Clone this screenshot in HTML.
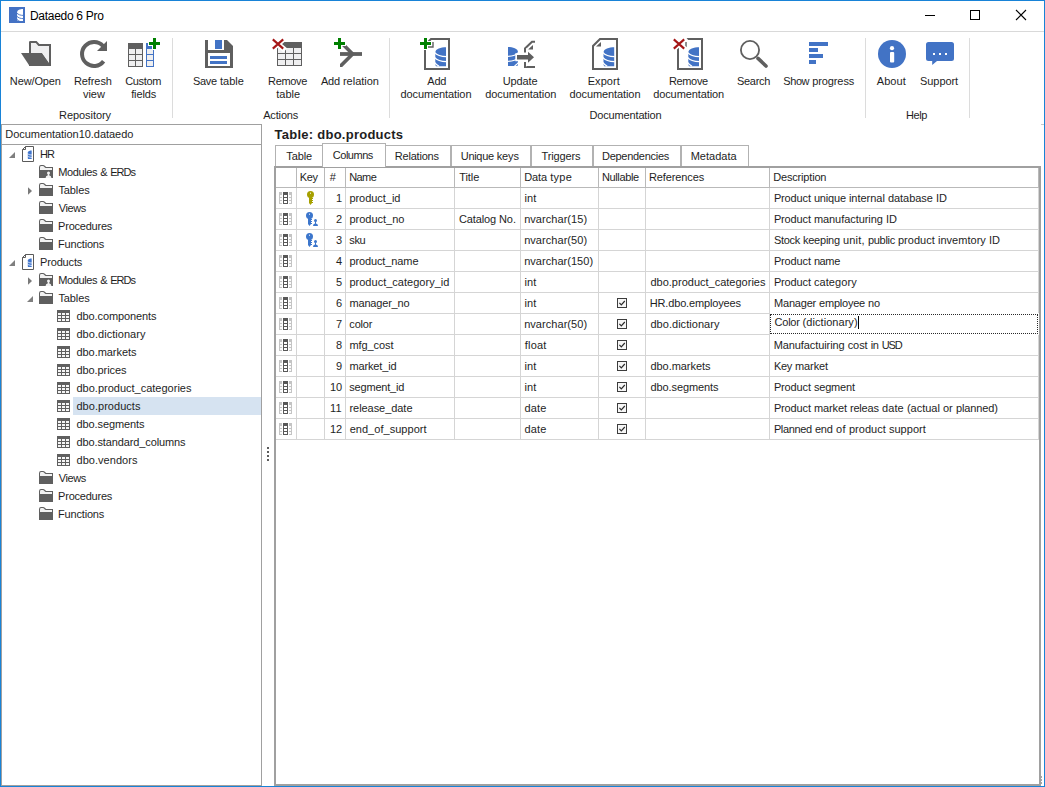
<!DOCTYPE html>
<html><head><meta charset="utf-8"><title>Dataedo 6 Pro</title>
<style>
html,body{margin:0;padding:0;background:#fff;}
body{width:1045px;height:787px;position:relative;overflow:hidden;font-family:"Liberation Sans",sans-serif;font-size:11px;color:#1e1e1e;}
.b{position:absolute;box-sizing:border-box;}
.t{position:absolute;white-space:pre;line-height:13px;height:13px;font-size:11px;}
.w{position:absolute;top:0;}
svg{position:absolute;overflow:visible;}

.t12{font-size:12px;line-height:15px;height:15px;}
.hd{font-weight:bold;font-size:13px;line-height:16px;height:16px;}

</style></head><body>
<div class="b" style="left:0px;top:0px;width:1045px;height:787px;border:1px solid #1883d7;"></div>
<svg style="left:9px;top:7px" width="16" height="16" viewBox="0 0 16 16"><rect width="16" height="16" fill="#4472c4"/><path d="M14 2C11 2 8.1 3 8.1 5.4V13L8.8 14H14Z" fill="#fff"/><path d="M7.6 5.8C9.4 7.8 11.6 8.4 14.4 8.4M7.6 9C9.4 11 11.6 11.6 14.4 11.6M7.6 12C8.6 13.2 9.6 13.9 10.8 14.4" stroke="#4472c4" stroke-width="0.9" fill="none"/></svg>
<svg style="left:21px;top:41px" width="30" height="25" viewBox="0 0 30 25"><path d="M8 1.2Q8 0 9.2 0H15.6L18.4 3H30V25H8Z" fill="#5f5f5f"/><path d="M10 2H14.8L17.4 5H28V22.4L20.7 12H10Z" fill="#efeff0"/><path d="M0 12H20.7L30 25H8.6Z" fill="#5f5f5f"/></svg>
<svg style="left:79px;top:39px" width="30" height="30" viewBox="0 0 30 30"><path d="M23.9 6.9A12 12 0 1 0 24.6 22.2" fill="none" stroke="#5f5f5f" stroke-width="4"/><path d="M28 2V12H18Z" fill="#5f5f5f"/></svg>
<svg style="left:128px;top:38px" width="32" height="30" viewBox="0 0 32 30"><rect x="0" y="5" width="15" height="24" fill="#5f5f5f"/><g fill="#efeff0"><rect x="1" y="11" width="6" height="5"/><rect x="8" y="11" width="6" height="5"/><rect x="1" y="17" width="6" height="5"/><rect x="8" y="17" width="6" height="5"/><rect x="1" y="23" width="6" height="5"/><rect x="8" y="23" width="6" height="5"/></g><rect x="18" y="5" width="8" height="24" fill="#4273c5"/><g fill="#efeff0"><rect x="19" y="11" width="6" height="5"/><rect x="19" y="17" width="6" height="5"/><rect x="19" y="23" width="6" height="5"/></g><path d="M20 5.5H33M26.5 -1V12" stroke="#fff" stroke-width="5"/><path d="M21 5.5H32M26.5 0V11" stroke="#008000" stroke-width="3"/></svg>
<svg style="left:205px;top:40px" width="28" height="28" viewBox="0 0 28 28"><path d="M0 0H22L28 6V28H0Z" fill="#5f5f5f"/><rect x="3" y="0" width="16" height="10" fill="#fff"/><rect x="3" y="13" width="22" height="13" fill="#fff"/><rect x="10" y="0" width="7" height="9" fill="#4273c5"/><rect x="5" y="16" width="17" height="3" fill="#4273c5"/><rect x="5" y="21" width="17" height="3" fill="#4273c5"/></svg>
<svg style="left:277px;top:42px" width="25" height="24" viewBox="0 0 25 24"><rect x="0" y="0" width="25" height="24" fill="#5f5f5f"/><g fill="#efeff0"><rect x="1" y="6" width="7" height="5"/><rect x="1" y="12" width="7" height="5"/><rect x="1" y="18" width="7" height="5"/><rect x="9" y="6" width="7" height="5"/><rect x="9" y="12" width="7" height="5"/><rect x="9" y="18" width="7" height="5"/><rect x="17" y="6" width="7" height="5"/><rect x="17" y="12" width="7" height="5"/><rect x="17" y="18" width="7" height="5"/></g></svg>
<svg style="left:272px;top:39px" width="12" height="10" viewBox="0 0 12 10"><path d="M0.8 0.4L11.2 9.6M11.2 0.4L0.8 9.6" stroke="#fff" stroke-width="5.4" stroke-linecap="square"/><path d="M0.8 0.4L11.2 9.6M11.2 0.4L0.8 9.6" stroke="#a51616" stroke-width="2.1"/></svg>
<svg style="left:338px;top:42px" width="26" height="26" viewBox="0 0 26 26"><clipPath id="ar"><rect x="2" y="0" width="24" height="25"/></clipPath><g clip-path="url(#ar)"><path d="M2 12H24" stroke="#5f5f5f" stroke-width="3.8" fill="none"/><path d="M3.6 1L14.6 12L1.6 25" stroke="#5f5f5f" stroke-width="3.6" fill="none"/></g></svg>
<svg style="left:334px;top:38px" width="11" height="11" viewBox="0 0 11 11"><path d="M-1 5.5H12M5.5 -1V12" stroke="#fff" stroke-width="5"/><path d="M0 5.5H11M5.5 0V11" stroke="#008000" stroke-width="3"/></svg>
<svg style="left:424px;top:38px" width="26" height="32" viewBox="0 0 26 32"><path d="M7 1H25V31H1V7Z" fill="#fff" stroke="#5f5f5f" stroke-width="2"/><path d="M9 4V9H4" fill="none" stroke="#5f5f5f" stroke-width="1.4"/><g transform="translate(11 9.3)"><path d="M11 0C6 0 0.3 1.6 0.3 5.2V17.4L1 19H11Z" fill="#4273c5"/><path d="M-0.5 5.1C2 8.1 7 9.3 11.5 9.3M-0.5 10.1C2 13.1 7 14.3 11.5 14.3M-0.5 15.2C1 17 2.4 18 4 19" stroke="#fff" stroke-width="1.3" fill="none"/></g></svg>
<svg style="left:420px;top:38px" width="11" height="11" viewBox="0 0 11 11"><path d="M-1 5.5H12M5.5 -1V12" stroke="#fff" stroke-width="5"/><path d="M0 5.5H11M5.5 0V11" stroke="#008000" stroke-width="3"/></svg>
<svg style="left:506px;top:40px" width="32" height="30" viewBox="0 0 32 30"><g transform="translate(12.3 7) scale(-0.936 1)"><path d="M11 0C6 0 0.3 1.6 0.3 5.2V17.4L1 19H11Z" fill="#4273c5"/><path d="M-0.5 5.1C2 8.1 7 9.3 11.5 9.3M-0.5 10.1C2 13.1 7 14.3 11.5 14.3M-0.5 15.2C1 17 2.4 18 4 19" stroke="#fff" stroke-width="1.3" fill="none"/></g><path d="M19 12.5V8.5L26 1.8H29M19 22V27H29" fill="none" stroke="#5f5f5f" stroke-width="2"/><path d="M22 9.5H27V5Z" fill="#5f5f5f"/><path d="M11 15H22V11.6L28.2 17.3L22 23V19.6H11Z" fill="#5f5f5f" stroke="#fff" stroke-width="3.4" stroke-linejoin="miter"/><path d="M11 15H22V11.8L28 17.3L22 22.8V19.6H11Z" fill="#5f5f5f"/></svg>
<svg style="left:592px;top:38px" width="26" height="32" viewBox="0 0 26 32"><path d="M8 1H25V31H1V8Z" fill="#fff" stroke="#5f5f5f" stroke-width="2"/><path d="M4 8.6H9V4Z" fill="#5f5f5f"/><g transform="translate(11.2 9.3)"><path d="M11 0C6 0 0.3 1.6 0.3 5.2V17.4L1 19H11Z" fill="#4273c5"/><path d="M-0.5 5.1C2 8.1 7 9.3 11.5 9.3M-0.5 10.1C2 13.1 7 14.3 11.5 14.3M-0.5 15.2C1 17 2.4 18 4 19" stroke="#fff" stroke-width="1.3" fill="none"/></g></svg>
<svg style="left:677px;top:38px" width="26" height="32" viewBox="0 0 26 32"><path d="M7 1H25V31H1V7Z" fill="#fff" stroke="#5f5f5f" stroke-width="2"/><path d="M9 4V9H4" fill="none" stroke="#5f5f5f" stroke-width="1.4"/><g transform="translate(11 9.3)"><path d="M11 0C6 0 0.3 1.6 0.3 5.2V17.4L1 19H11Z" fill="#4273c5"/><path d="M-0.5 5.1C2 8.1 7 9.3 11.5 9.3M-0.5 10.1C2 13.1 7 14.3 11.5 14.3M-0.5 15.2C1 17 2.4 18 4 19" stroke="#fff" stroke-width="1.3" fill="none"/></g></svg>
<svg style="left:673px;top:39px" width="12" height="10" viewBox="0 0 12 10"><path d="M0.8 0.4L11.2 9.6M11.2 0.4L0.8 9.6" stroke="#fff" stroke-width="5.4" stroke-linecap="square"/><path d="M0.8 0.4L11.2 9.6M11.2 0.4L0.8 9.6" stroke="#a51616" stroke-width="2.1"/></svg>
<svg style="left:740px;top:40px" width="30" height="30" viewBox="0 0 30 30"><circle cx="10" cy="10" r="9.1" fill="none" stroke="#5f5f5f" stroke-width="1.8"/><path d="M18 18.4L26 26" stroke="#5f5f5f" stroke-width="3.6" stroke-linecap="round"/></svg>
<svg style="left:809px;top:42px" width="20" height="22" viewBox="0 0 20 22"><rect x="0" y="0" width="19" height="4" fill="#4273c5"/><rect x="0" y="6" width="9" height="4" fill="#4273c5"/><rect x="0" y="12" width="14" height="4" fill="#4273c5"/><rect x="0" y="18" width="7" height="4" fill="#4273c5"/></svg>
<svg style="left:878px;top:40px" width="28" height="28" viewBox="0 0 28 28"><circle cx="14" cy="14" r="14" fill="#4273c5"/><circle cx="14" cy="8.2" r="2.1" fill="#fff"/><rect x="12" y="12" width="4.2" height="10.5" rx="1" fill="#fff"/></svg>
<svg style="left:926px;top:42px" width="28" height="24" viewBox="0 0 28 24"><path d="M2.5 0H25.5Q28 0 28 2.5V16.5Q28 19 25.5 19H11L6.2 23V19H2.5Q0 19 0 16.5V2.5Q0 0 2.5 0Z" fill="#4273c5"/><g fill="#fff"><rect x="7" y="11" width="2" height="2"/><rect x="13" y="11" width="2" height="2"/><rect x="19" y="11" width="2" height="2"/></g></svg>
<span class="t t12" style="left:29.96px;top:9px;letter-spacing:-0.293px;color:#000;">Dataedo 6 Pro</span>
<div class="b" style="left:1px;top:31px;width:1043px;height:1px;background:#d9d9d9;"></div>
<svg style="left:920px;top:5px" width="120" height="22" viewBox="0 0 120 22"><path d="M5 10.5h10" stroke="#000" stroke-width="1" fill="none"/><rect x="50.5" y="5.5" width="9" height="9" stroke="#000" fill="none"/><path d="M96 5l10 10M106 5l-10 10" stroke="#000" stroke-width="1.1" fill="none"/></svg>
<span class="t " style="left:9.83px;top:75px;"><span class="w" style="letter-spacing:-0.123px;">New/Open</span></span>
<span class="t " style="left:73.89px;top:75px;"><span class="w" style="letter-spacing:-0.074px;">Refresh</span></span>
<span class="t " style="left:82.9px;top:88px;"><span class="w" style="letter-spacing:-0.004px;">view</span></span>
<span class="t " style="left:125.2px;top:75px;"><span class="w" style="letter-spacing:-0.318px;">Custom</span></span>
<span class="t " style="left:131.15px;top:88px;"><span class="w" style="letter-spacing:-0.115px;">fields</span></span>
<span class="t " style="left:192.92px;top:75px;"><span class="w" style="letter-spacing:-0.27px;">Save</span><span class="w" style="left:27px;letter-spacing:0.028px;">table</span></span>
<span class="t " style="left:268.02px;top:75px;"><span class="w" style="letter-spacing:-0.328px;">Remove</span></span>
<span class="t " style="left:276.16px;top:88px;"><span class="w" style="letter-spacing:0.028px;">table</span></span>
<span class="t " style="left:320.94px;top:75px;"><span class="w" style="letter-spacing:-0.193px;">Add</span><span class="w" style="left:22px;letter-spacing:-0.01px;">relation</span></span>
<span class="t " style="left:427.3px;top:75px;"><span class="w" style="letter-spacing:-0.193px;">Add</span></span>
<span class="t " style="left:400.44px;top:88px;"><span class="w" style="letter-spacing:-0.09px;">documentation</span></span>
<span class="t " style="left:502.64px;top:75px;"><span class="w" style="letter-spacing:-0.081px;">Update</span></span>
<span class="t " style="left:485.26px;top:88px;"><span class="w" style="letter-spacing:-0.09px;">documentation</span></span>
<span class="t " style="left:587.74px;top:75px;"><span class="w" style="letter-spacing:0.034px;">Export</span></span>
<span class="t " style="left:569.44px;top:88px;"><span class="w" style="letter-spacing:-0.09px;">documentation</span></span>
<span class="t " style="left:668.89px;top:75px;"><span class="w" style="letter-spacing:-0.328px;">Remove</span></span>
<span class="t " style="left:653.16px;top:88px;"><span class="w" style="letter-spacing:-0.09px;">documentation</span></span>
<span class="t " style="left:737.0px;top:75px;"><span class="w" style="letter-spacing:-0.31px;">Search</span></span>
<span class="t " style="left:783.19px;top:75px;"><span class="w" style="letter-spacing:-0.379px;">Show</span><span class="w" style="left:29px;letter-spacing:-0.1px;">progress</span></span>
<span class="t " style="left:876.81px;top:75px;"><span class="w" style="letter-spacing:0.05px;">About</span></span>
<span class="t " style="left:920.05px;top:75px;"><span class="w" style="letter-spacing:-0.076px;">Support</span></span>
<span class="t " style="left:59.01px;top:109px;"><span class="w" style="letter-spacing:-0.058px;">Repository</span></span>
<span class="t " style="left:263.16px;top:109px;"><span class="w" style="letter-spacing:-0.154px;">Actions</span></span>
<span class="t " style="left:589.49px;top:109px;"><span class="w" style="letter-spacing:-0.154px;">Documentation</span></span>
<span class="t " style="left:905.9px;top:109px;"><span class="w" style="letter-spacing:-0.406px;">Help</span></span>
<div class="b" style="left:172px;top:38px;width:1px;height:80px;background:#dcdcdc;"></div>
<div class="b" style="left:389px;top:38px;width:1px;height:80px;background:#dcdcdc;"></div>
<div class="b" style="left:865px;top:38px;width:1px;height:80px;background:#dcdcdc;"></div>
<div class="b" style="left:969px;top:38px;width:1px;height:80px;background:#dcdcdc;"></div>
<div class="b" style="left:1041px;top:124px;width:3px;height:1px;background:#c8c8c8;"></div>
<div class="b" style="left:1px;top:124px;width:261px;height:21px;border:1px solid #a0a0a0;border-bottom:none;"></div>
<span class="t " style="left:5.28px;top:128px;"><span class="w" style="letter-spacing:-0.045px;">Documentation10.dataedo</span></span>
<div class="b" style="left:1px;top:144px;width:261px;height:642px;border:1px solid #a0a0a0;"></div>
<div class="b" style="left:73px;top:397px;width:188px;height:18px;background:#d6e3f1;"></div>
<span class="t " style="left:40.11px;top:148px;"><span class="w" style="letter-spacing:-0.945px;">HR</span></span>
<svg style="left:22px;top:146px" width="12" height="16" viewBox="0 0 12 16"><path d="M3.5 0.5H11.5V15.5H0.5V3.5Z" fill="#fff" stroke="#5a5a5a"/><path d="M3.5 0.5V3.5H0.5" fill="none" stroke="#5a5a5a"/><path d="M9.7 4.6C8 4.6 6 5.2 5.8 6.6V12.4L6.2 13H9.7Z" fill="#3f74cc"/><path d="M5.6 7.6C6.6 8.6 8.2 9 10 9M5.6 10C6.6 11 8.2 11.4 10 11.4" stroke="#fff" stroke-width=".8" fill="none"/></svg>
<svg style="left:9px;top:152px" width="6" height="6" viewBox="0 0 6 6"><path d="M6 0V6H0Z" fill="#7f7f7f"/></svg>
<span class="t " style="left:58.18px;top:166px;"><span class="w" style="letter-spacing:-0.371px;">Modules</span><span class="w" style="left:42px;letter-spacing:-0.344px;">&amp;</span><span class="w" style="left:52px;letter-spacing:-0.934px;">ERDs</span></span>
<svg style="left:39px;top:165px" width="14" height="13" viewBox="0 0 14 13"><path d="M0 13V2.2Q0 0 2 0H4.2Q5.6 0 6.6 1.6L7.2 2H14V13Z" fill="#5f5f5f"/><path d="M1 5V2.4Q1 1 2.2 1H4Q5 1.2 5.8 2.4L6.6 3H13V5Z" fill="#f2f2f2"/><circle cx="9.5" cy="8" r="1.5" fill="#f2f2f2"/><path d="M9 9H10L10.4 10.6Q12.4 11 12.4 13H6.6Q6.6 11 8.6 10.6Z" fill="#f2f2f2"/></svg>
<span class="t " style="left:58.51px;top:184px;"><span class="w" style="letter-spacing:-0.133px;">Tables</span></span>
<svg style="left:39px;top:183px" width="14" height="13" viewBox="0 0 14 13"><path d="M0 13V2.2Q0 0 2 0H4.2Q5.6 0 6.6 1.6L7.2 2H14V13Z" fill="#5f5f5f"/><path d="M1 5V2.4Q1 1 2.2 1H4Q5 1.2 5.8 2.4L6.6 3H13V5Z" fill="#f2f2f2"/></svg>
<svg style="left:28px;top:187px" width="4" height="8" viewBox="0 0 4 8"><path d="M0 0.3L4 4L0 7.7Z" fill="#7a7a7a"/></svg>
<span class="t " style="left:58.75px;top:202px;"><span class="w" style="letter-spacing:-0.431px;">Views</span></span>
<svg style="left:39px;top:201px" width="14" height="13" viewBox="0 0 14 13"><path d="M0 13V2.2Q0 0 2 0H4.2Q5.6 0 6.6 1.6L7.2 2H14V13Z" fill="#5f5f5f"/><path d="M1 5V2.4Q1 1 2.2 1H4Q5 1.2 5.8 2.4L6.6 3H13V5Z" fill="#f2f2f2"/></svg>
<span class="t " style="left:58.1px;top:220px;"><span class="w" style="letter-spacing:-0.225px;">Procedures</span></span>
<svg style="left:39px;top:219px" width="14" height="13" viewBox="0 0 14 13"><path d="M0 13V2.2Q0 0 2 0H4.2Q5.6 0 6.6 1.6L7.2 2H14V13Z" fill="#5f5f5f"/><path d="M1 5V2.4Q1 1 2.2 1H4Q5 1.2 5.8 2.4L6.6 3H13V5Z" fill="#f2f2f2"/></svg>
<span class="t " style="left:58.1px;top:238px;"><span class="w" style="letter-spacing:-0.189px;">Functions</span></span>
<svg style="left:39px;top:237px" width="14" height="13" viewBox="0 0 14 13"><path d="M0 13V2.2Q0 0 2 0H4.2Q5.6 0 6.6 1.6L7.2 2H14V13Z" fill="#5f5f5f"/><path d="M1 5V2.4Q1 1 2.2 1H4Q5 1.2 5.8 2.4L6.6 3H13V5Z" fill="#f2f2f2"/></svg>
<span class="t " style="left:40.1px;top:256px;"><span class="w" style="letter-spacing:-0.178px;">Products</span></span>
<svg style="left:22px;top:254px" width="12" height="16" viewBox="0 0 12 16"><path d="M3.5 0.5H11.5V15.5H0.5V3.5Z" fill="#fff" stroke="#5a5a5a"/><path d="M3.5 0.5V3.5H0.5" fill="none" stroke="#5a5a5a"/><path d="M9.7 4.6C8 4.6 6 5.2 5.8 6.6V12.4L6.2 13H9.7Z" fill="#3f74cc"/><path d="M5.6 7.6C6.6 8.6 8.2 9 10 9M5.6 10C6.6 11 8.2 11.4 10 11.4" stroke="#fff" stroke-width=".8" fill="none"/></svg>
<svg style="left:9px;top:260px" width="6" height="6" viewBox="0 0 6 6"><path d="M6 0V6H0Z" fill="#7f7f7f"/></svg>
<span class="t " style="left:58.18px;top:274px;"><span class="w" style="letter-spacing:-0.371px;">Modules</span><span class="w" style="left:42px;letter-spacing:-0.344px;">&amp;</span><span class="w" style="left:52px;letter-spacing:-0.934px;">ERDs</span></span>
<svg style="left:39px;top:273px" width="14" height="13" viewBox="0 0 14 13"><path d="M0 13V2.2Q0 0 2 0H4.2Q5.6 0 6.6 1.6L7.2 2H14V13Z" fill="#5f5f5f"/><path d="M1 5V2.4Q1 1 2.2 1H4Q5 1.2 5.8 2.4L6.6 3H13V5Z" fill="#f2f2f2"/><circle cx="9.5" cy="8" r="1.5" fill="#f2f2f2"/><path d="M9 9H10L10.4 10.6Q12.4 11 12.4 13H6.6Q6.6 11 8.6 10.6Z" fill="#f2f2f2"/></svg>
<svg style="left:28px;top:277px" width="4" height="8" viewBox="0 0 4 8"><path d="M0 0.3L4 4L0 7.7Z" fill="#7a7a7a"/></svg>
<span class="t " style="left:58.51px;top:292px;"><span class="w" style="letter-spacing:-0.133px;">Tables</span></span>
<svg style="left:39px;top:291px" width="14" height="13" viewBox="0 0 14 13"><path d="M0 13V2.2Q0 0 2 0H4.2Q5.6 0 6.6 1.6L7.2 2H14V13Z" fill="#5f5f5f"/><path d="M1 5V2.4Q1 1 2.2 1H4Q5 1.2 5.8 2.4L6.6 3H13V5Z" fill="#f2f2f2"/></svg>
<svg style="left:27px;top:296px" width="6" height="6" viewBox="0 0 6 6"><path d="M6 0V6H0Z" fill="#7f7f7f"/></svg>
<span class="t " style="left:76.47px;top:310px;"><span class="w" style="letter-spacing:-0.096px;">dbo.components</span></span>
<svg style="left:57px;top:310px" width="13" height="12" viewBox="0 0 13 12"><rect x="0" y="0" width="13" height="12" fill="#5f5f5f"/><g fill="#f6f6f6"><rect x="1" y="3" width="3" height="2"/><rect x="5" y="3" width="3" height="2"/><rect x="9" y="3" width="3" height="2"/><rect x="1" y="6" width="3" height="2"/><rect x="5" y="6" width="3" height="2"/><rect x="9" y="6" width="3" height="2"/><rect x="1" y="9" width="3" height="2"/><rect x="5" y="9" width="3" height="2"/><rect x="9" y="9" width="3" height="2"/></g></svg>
<span class="t " style="left:76.46px;top:328px;"><span class="w" style="letter-spacing:0.036px;">dbo.dictionary</span></span>
<svg style="left:57px;top:328px" width="13" height="12" viewBox="0 0 13 12"><rect x="0" y="0" width="13" height="12" fill="#5f5f5f"/><g fill="#f6f6f6"><rect x="1" y="3" width="3" height="2"/><rect x="5" y="3" width="3" height="2"/><rect x="9" y="3" width="3" height="2"/><rect x="1" y="6" width="3" height="2"/><rect x="5" y="6" width="3" height="2"/><rect x="9" y="6" width="3" height="2"/><rect x="1" y="9" width="3" height="2"/><rect x="5" y="9" width="3" height="2"/><rect x="9" y="9" width="3" height="2"/></g></svg>
<span class="t " style="left:76.47px;top:346px;"><span class="w" style="letter-spacing:-0.048px;">dbo.markets</span></span>
<svg style="left:57px;top:346px" width="13" height="12" viewBox="0 0 13 12"><rect x="0" y="0" width="13" height="12" fill="#5f5f5f"/><g fill="#f6f6f6"><rect x="1" y="3" width="3" height="2"/><rect x="5" y="3" width="3" height="2"/><rect x="9" y="3" width="3" height="2"/><rect x="1" y="6" width="3" height="2"/><rect x="5" y="6" width="3" height="2"/><rect x="9" y="6" width="3" height="2"/><rect x="1" y="9" width="3" height="2"/><rect x="5" y="9" width="3" height="2"/><rect x="9" y="9" width="3" height="2"/></g></svg>
<span class="t " style="left:76.48px;top:364px;"><span class="w" style="letter-spacing:-0.075px;">dbo.prices</span></span>
<svg style="left:57px;top:364px" width="13" height="12" viewBox="0 0 13 12"><rect x="0" y="0" width="13" height="12" fill="#5f5f5f"/><g fill="#f6f6f6"><rect x="1" y="3" width="3" height="2"/><rect x="5" y="3" width="3" height="2"/><rect x="9" y="3" width="3" height="2"/><rect x="1" y="6" width="3" height="2"/><rect x="5" y="6" width="3" height="2"/><rect x="9" y="6" width="3" height="2"/><rect x="1" y="9" width="3" height="2"/><rect x="5" y="9" width="3" height="2"/><rect x="9" y="9" width="3" height="2"/></g></svg>
<span class="t " style="left:76.47px;top:382px;"><span class="w" style="letter-spacing:0.001px;">dbo.product_categories</span></span>
<svg style="left:57px;top:382px" width="13" height="12" viewBox="0 0 13 12"><rect x="0" y="0" width="13" height="12" fill="#5f5f5f"/><g fill="#f6f6f6"><rect x="1" y="3" width="3" height="2"/><rect x="5" y="3" width="3" height="2"/><rect x="9" y="3" width="3" height="2"/><rect x="1" y="6" width="3" height="2"/><rect x="5" y="6" width="3" height="2"/><rect x="9" y="6" width="3" height="2"/><rect x="1" y="9" width="3" height="2"/><rect x="5" y="9" width="3" height="2"/><rect x="9" y="9" width="3" height="2"/></g></svg>
<span class="t " style="left:76.47px;top:400px;"><span class="w" style="letter-spacing:0.033px;">dbo.products</span></span>
<svg style="left:57px;top:400px" width="13" height="12" viewBox="0 0 13 12"><rect x="0" y="0" width="13" height="12" fill="#5f5f5f"/><g fill="#f6f6f6"><rect x="1" y="3" width="3" height="2"/><rect x="5" y="3" width="3" height="2"/><rect x="9" y="3" width="3" height="2"/><rect x="1" y="6" width="3" height="2"/><rect x="5" y="6" width="3" height="2"/><rect x="9" y="6" width="3" height="2"/><rect x="1" y="9" width="3" height="2"/><rect x="5" y="9" width="3" height="2"/><rect x="9" y="9" width="3" height="2"/></g></svg>
<span class="t " style="left:76.47px;top:418px;"><span class="w" style="letter-spacing:-0.092px;">dbo.segments</span></span>
<svg style="left:57px;top:418px" width="13" height="12" viewBox="0 0 13 12"><rect x="0" y="0" width="13" height="12" fill="#5f5f5f"/><g fill="#f6f6f6"><rect x="1" y="3" width="3" height="2"/><rect x="5" y="3" width="3" height="2"/><rect x="9" y="3" width="3" height="2"/><rect x="1" y="6" width="3" height="2"/><rect x="5" y="6" width="3" height="2"/><rect x="9" y="6" width="3" height="2"/><rect x="1" y="9" width="3" height="2"/><rect x="5" y="9" width="3" height="2"/><rect x="9" y="9" width="3" height="2"/></g></svg>
<span class="t " style="left:76.46px;top:436px;"><span class="w" style="letter-spacing:-0.115px;">dbo.standard_columns</span></span>
<svg style="left:57px;top:436px" width="13" height="12" viewBox="0 0 13 12"><rect x="0" y="0" width="13" height="12" fill="#5f5f5f"/><g fill="#f6f6f6"><rect x="1" y="3" width="3" height="2"/><rect x="5" y="3" width="3" height="2"/><rect x="9" y="3" width="3" height="2"/><rect x="1" y="6" width="3" height="2"/><rect x="5" y="6" width="3" height="2"/><rect x="9" y="6" width="3" height="2"/><rect x="1" y="9" width="3" height="2"/><rect x="5" y="9" width="3" height="2"/><rect x="9" y="9" width="3" height="2"/></g></svg>
<span class="t " style="left:76.48px;top:454px;"><span class="w" style="letter-spacing:0.041px;">dbo.vendors</span></span>
<svg style="left:57px;top:454px" width="13" height="12" viewBox="0 0 13 12"><rect x="0" y="0" width="13" height="12" fill="#5f5f5f"/><g fill="#f6f6f6"><rect x="1" y="3" width="3" height="2"/><rect x="5" y="3" width="3" height="2"/><rect x="9" y="3" width="3" height="2"/><rect x="1" y="6" width="3" height="2"/><rect x="5" y="6" width="3" height="2"/><rect x="9" y="6" width="3" height="2"/><rect x="1" y="9" width="3" height="2"/><rect x="5" y="9" width="3" height="2"/><rect x="9" y="9" width="3" height="2"/></g></svg>
<span class="t " style="left:58.75px;top:472px;"><span class="w" style="letter-spacing:-0.431px;">Views</span></span>
<svg style="left:39px;top:471px" width="14" height="13" viewBox="0 0 14 13"><path d="M0 13V2.2Q0 0 2 0H4.2Q5.6 0 6.6 1.6L7.2 2H14V13Z" fill="#5f5f5f"/><path d="M1 5V2.4Q1 1 2.2 1H4Q5 1.2 5.8 2.4L6.6 3H13V5Z" fill="#f2f2f2"/></svg>
<span class="t " style="left:58.1px;top:490px;"><span class="w" style="letter-spacing:-0.225px;">Procedures</span></span>
<svg style="left:39px;top:489px" width="14" height="13" viewBox="0 0 14 13"><path d="M0 13V2.2Q0 0 2 0H4.2Q5.6 0 6.6 1.6L7.2 2H14V13Z" fill="#5f5f5f"/><path d="M1 5V2.4Q1 1 2.2 1H4Q5 1.2 5.8 2.4L6.6 3H13V5Z" fill="#f2f2f2"/></svg>
<span class="t " style="left:58.1px;top:508px;"><span class="w" style="letter-spacing:-0.189px;">Functions</span></span>
<svg style="left:39px;top:507px" width="14" height="13" viewBox="0 0 14 13"><path d="M0 13V2.2Q0 0 2 0H4.2Q5.6 0 6.6 1.6L7.2 2H14V13Z" fill="#5f5f5f"/><path d="M1 5V2.4Q1 1 2.2 1H4Q5 1.2 5.8 2.4L6.6 3H13V5Z" fill="#f2f2f2"/></svg>
<div class="b" style="left:1041px;top:776px;width:1px;height:2px;background:#a8a8a8;"></div>
<div class="b" style="left:1041px;top:779px;width:1px;height:2px;background:#a8a8a8;"></div>
<div class="b" style="left:1041px;top:782px;width:1px;height:2px;background:#a8a8a8;"></div>
<div class="b" style="left:267px;top:447px;width:2px;height:2px;background:#5c5c5c;"></div>
<div class="b" style="left:267px;top:451px;width:2px;height:2px;background:#5c5c5c;"></div>
<div class="b" style="left:267px;top:455px;width:2px;height:2px;background:#5c5c5c;"></div>
<div class="b" style="left:267px;top:459px;width:2px;height:2px;background:#5c5c5c;"></div>
<span class="t hd" style="left:274.56px;top:127px;letter-spacing:0.252px;">Table: dbo.products</span>
<div class="b" style="left:275px;top:145px;width:48px;height:22px;border:1px solid #b2b2b2;"></div>
<span class="t " style="left:286.19px;top:150px;"><span class="w" style="letter-spacing:-0.062px;">Table</span></span>
<div class="b" style="left:385px;top:145px;width:66px;height:22px;border:1px solid #b2b2b2;"></div>
<span class="t " style="left:394.77px;top:150px;"><span class="w" style="letter-spacing:-0.207px;">Relations</span></span>
<div class="b" style="left:451px;top:145px;width:80px;height:22px;border:1px solid #b2b2b2;"></div>
<span class="t " style="left:460.76px;top:150px;"><span class="w" style="letter-spacing:-0.31px;">Unique</span><span class="w" style="left:36px;letter-spacing:-0.156px;">keys</span></span>
<div class="b" style="left:531px;top:145px;width:62px;height:22px;border:1px solid #b2b2b2;"></div>
<span class="t " style="left:541.5px;top:150px;"><span class="w" style="letter-spacing:-0.117px;">Triggers</span></span>
<div class="b" style="left:593px;top:145px;width:88px;height:22px;border:1px solid #b2b2b2;"></div>
<span class="t " style="left:602.01px;top:150px;"><span class="w" style="letter-spacing:-0.277px;">Dependencies</span></span>
<div class="b" style="left:681px;top:145px;width:68px;height:22px;border:1px solid #b2b2b2;"></div>
<span class="t " style="left:690.65px;top:150px;"><span class="w" style="letter-spacing:0.016px;">Metadata</span></span>
<div class="b" style="left:274px;top:166px;width:767px;height:620px;background:#fff;border:2px solid #a0a0a0;"></div>
<div class="b" style="left:322px;top:143px;width:64px;height:24px;background:#fff;border:1px solid #b2b2b2;border-bottom:none;"></div>
<span class="t " style="left:332.83px;top:149px;"><span class="w" style="letter-spacing:-0.487px;">Columns</span></span>
<div class="b" style="left:276px;top:187px;width:763px;height:1px;background:#b9b9b9;"></div>
<div class="b" style="left:276px;top:208px;width:763px;height:1px;background:#d5d5d5;"></div>
<div class="b" style="left:276px;top:229px;width:763px;height:1px;background:#d5d5d5;"></div>
<div class="b" style="left:276px;top:250px;width:763px;height:1px;background:#d5d5d5;"></div>
<div class="b" style="left:276px;top:271px;width:763px;height:1px;background:#d5d5d5;"></div>
<div class="b" style="left:276px;top:292px;width:763px;height:1px;background:#d5d5d5;"></div>
<div class="b" style="left:276px;top:313px;width:763px;height:1px;background:#d5d5d5;"></div>
<div class="b" style="left:276px;top:334px;width:763px;height:1px;background:#d5d5d5;"></div>
<div class="b" style="left:276px;top:355px;width:763px;height:1px;background:#d5d5d5;"></div>
<div class="b" style="left:276px;top:376px;width:763px;height:1px;background:#d5d5d5;"></div>
<div class="b" style="left:276px;top:397px;width:763px;height:1px;background:#d5d5d5;"></div>
<div class="b" style="left:276px;top:418px;width:763px;height:1px;background:#d5d5d5;"></div>
<div class="b" style="left:276px;top:439px;width:763px;height:1px;background:#d5d5d5;"></div>
<div class="b" style="left:296px;top:168px;width:1px;height:19px;background:#b9b9b9;"></div>
<div class="b" style="left:296px;top:188px;width:1px;height:252px;background:#d5d5d5;"></div>
<div class="b" style="left:324px;top:168px;width:1px;height:19px;background:#b9b9b9;"></div>
<div class="b" style="left:324px;top:188px;width:1px;height:252px;background:#d5d5d5;"></div>
<div class="b" style="left:345px;top:168px;width:1px;height:19px;background:#b9b9b9;"></div>
<div class="b" style="left:345px;top:188px;width:1px;height:252px;background:#d5d5d5;"></div>
<div class="b" style="left:454px;top:168px;width:1px;height:19px;background:#b9b9b9;"></div>
<div class="b" style="left:454px;top:188px;width:1px;height:252px;background:#d5d5d5;"></div>
<div class="b" style="left:520px;top:168px;width:1px;height:19px;background:#b9b9b9;"></div>
<div class="b" style="left:520px;top:188px;width:1px;height:252px;background:#d5d5d5;"></div>
<div class="b" style="left:598px;top:168px;width:1px;height:19px;background:#b9b9b9;"></div>
<div class="b" style="left:598px;top:188px;width:1px;height:252px;background:#d5d5d5;"></div>
<div class="b" style="left:645px;top:168px;width:1px;height:19px;background:#b9b9b9;"></div>
<div class="b" style="left:645px;top:188px;width:1px;height:252px;background:#d5d5d5;"></div>
<div class="b" style="left:769px;top:168px;width:1px;height:19px;background:#b9b9b9;"></div>
<div class="b" style="left:769px;top:188px;width:1px;height:252px;background:#d5d5d5;"></div>
<div class="b" style="left:1038px;top:168px;width:1px;height:19px;background:#b9b9b9;"></div>
<div class="b" style="left:1038px;top:188px;width:1px;height:252px;background:#d5d5d5;"></div>
<span class="t " style="left:299.66px;top:171px;"><span class="w" style="letter-spacing:-0.323px;">Key</span></span>
<span class="t " style="left:329.73px;top:171px;"><span class="w" style="letter-spacing:1.875px;">#</span></span>
<span class="t " style="left:349.2px;top:171px;"><span class="w" style="letter-spacing:-0.586px;">Name</span></span>
<span class="t " style="left:459.19px;top:171px;"><span class="w" style="letter-spacing:-0.075px;">Title</span></span>
<span class="t " style="left:524.15px;top:171px;"><span class="w" style="letter-spacing:-0.062px;">Data</span><span class="w" style="left:26px;letter-spacing:0.301px;">type</span></span>
<span class="t " style="left:601.89px;top:171px;"><span class="w" style="letter-spacing:-0.344px;">Nullable</span></span>
<span class="t " style="left:649.02px;top:171px;"><span class="w" style="letter-spacing:-0.125px;">References</span></span>
<span class="t " style="left:773.31px;top:171px;"><span class="w" style="letter-spacing:-0.185px;">Description</span></span>
<svg style="left:279px;top:192px" width="13" height="12" viewBox="0 0 13 12"><rect x="0" y="0" width="3" height="12" fill="#c4c4c4"/><rect x="10" y="0" width="3" height="12" fill="#c4c4c4"/><g fill="#fbfbfb"><rect x="1" y="3" width="2" height="2"/><rect x="1" y="6" width="2" height="2"/><rect x="1" y="9" width="2" height="2"/><rect x="10" y="3" width="2" height="2"/><rect x="10" y="6" width="2" height="2"/><rect x="10" y="9" width="2" height="2"/></g><rect x="4" y="0" width="5" height="12" fill="#585858"/><g fill="#fff"><rect x="5" y="3" width="3" height="2"/><rect x="5" y="6" width="3" height="2"/><rect x="5" y="9" width="3" height="2"/></g></svg>
<svg style="left:307px;top:191px" width="8" height="14" viewBox="0 0 8 14"><circle cx="3.5" cy="3.5" r="3.5" fill="#a6a000"/><rect x="3" y="1.7" width="1" height="1" fill="#fff"/><path d="M2 6H5V7H6V8H5V9H6V10H5V11H6V12H5L3.5 14L2 12Z" fill="#a6a000"/></svg>
<span class="t " style="left:336px;top:192px;"><span class="w" style="letter-spacing:-0.125px;">1</span></span>
<span class="t " style="left:349.41px;top:192px;"><span class="w" style="letter-spacing:-0.037px;">product_id</span></span>
<span class="t " style="left:524.53px;top:192px;"><span class="w" style="letter-spacing:0.125px;">int</span></span>
<span class="t " style="left:773.89px;top:192px;"><span class="w" style="letter-spacing:-0.132px;">Product</span><span class="w" style="left:40px;letter-spacing:-0.174px;">unique</span><span class="w" style="left:75px;letter-spacing:-0.01px;">internal</span><span class="w" style="left:114px;letter-spacing:-0.033px;">database</span><span class="w" style="left:162px;">ID</span></span>
<svg style="left:279px;top:213px" width="13" height="12" viewBox="0 0 13 12"><rect x="0" y="0" width="3" height="12" fill="#c4c4c4"/><rect x="10" y="0" width="3" height="12" fill="#c4c4c4"/><g fill="#fbfbfb"><rect x="1" y="3" width="2" height="2"/><rect x="1" y="6" width="2" height="2"/><rect x="1" y="9" width="2" height="2"/><rect x="10" y="3" width="2" height="2"/><rect x="10" y="6" width="2" height="2"/><rect x="10" y="9" width="2" height="2"/></g><rect x="4" y="0" width="5" height="12" fill="#585858"/><g fill="#fff"><rect x="5" y="3" width="3" height="2"/><rect x="5" y="6" width="3" height="2"/><rect x="5" y="9" width="3" height="2"/></g></svg>
<svg style="left:306px;top:212px" width="8" height="14" viewBox="0 0 8 14"><circle cx="3.5" cy="3.5" r="3.5" fill="#3c76cc"/><rect x="3" y="1.7" width="1" height="1" fill="#fff"/><path d="M2 6H5V7H6V8H5V9H6V10H5V11H6V12H5L3.5 14L2 12Z" fill="#3c76cc"/></svg>
<svg style="left:313px;top:219px" width="5" height="7" viewBox="0 0 5 7"><circle cx="2.5" cy="1.5" r="1.5" fill="#3c76cc"/><path d="M2 2.5H3V4.4Q5 4.8 5 7H0Q0 4.8 2 4.4Z" fill="#3c76cc"/></svg>
<span class="t " style="left:336px;top:213px;"><span class="w" style="letter-spacing:-0.125px;">2</span></span>
<span class="t " style="left:349.41px;top:213px;"><span class="w" style="letter-spacing:-0.005px;">product_no</span></span>
<span class="t " style="left:458.97px;top:213px;"><span class="w" style="letter-spacing:-0.132px;">Catalog</span><span class="w" style="left:40px;letter-spacing:-0.042px;">No.</span></span>
<span class="t " style="left:524.15px;top:213px;"><span class="w" style="letter-spacing:0.053px;">nvarchar(15)</span></span>
<span class="t " style="left:773.89px;top:213px;"><span class="w" style="letter-spacing:-0.132px;">Product</span><span class="w" style="left:40px;letter-spacing:-0.055px;">manufacturing</span><span class="w" style="left:112px;">ID</span></span>
<svg style="left:279px;top:234px" width="13" height="12" viewBox="0 0 13 12"><rect x="0" y="0" width="3" height="12" fill="#c4c4c4"/><rect x="10" y="0" width="3" height="12" fill="#c4c4c4"/><g fill="#fbfbfb"><rect x="1" y="3" width="2" height="2"/><rect x="1" y="6" width="2" height="2"/><rect x="1" y="9" width="2" height="2"/><rect x="10" y="3" width="2" height="2"/><rect x="10" y="6" width="2" height="2"/><rect x="10" y="9" width="2" height="2"/></g><rect x="4" y="0" width="5" height="12" fill="#585858"/><g fill="#fff"><rect x="5" y="3" width="3" height="2"/><rect x="5" y="6" width="3" height="2"/><rect x="5" y="9" width="3" height="2"/></g></svg>
<svg style="left:306px;top:233px" width="8" height="14" viewBox="0 0 8 14"><circle cx="3.5" cy="3.5" r="3.5" fill="#3c76cc"/><rect x="3" y="1.7" width="1" height="1" fill="#fff"/><path d="M2 6H5V7H6V8H5V9H6V10H5V11H6V12H5L3.5 14L2 12Z" fill="#3c76cc"/></svg>
<svg style="left:313px;top:240px" width="5" height="7" viewBox="0 0 5 7"><circle cx="2.5" cy="1.5" r="1.5" fill="#3c76cc"/><path d="M2 2.5H3V4.4Q5 4.8 5 7H0Q0 4.8 2 4.4Z" fill="#3c76cc"/></svg>
<span class="t " style="left:336px;top:234px;"><span class="w" style="letter-spacing:-0.125px;">3</span></span>
<span class="t " style="left:349.26px;top:234px;"><span class="w" style="letter-spacing:-0.375px;">sku</span></span>
<span class="t " style="left:524.14px;top:234px;"><span class="w" style="letter-spacing:0.053px;">nvarchar(50)</span></span>
<span class="t " style="left:773.91px;top:234px;"><span class="w" style="letter-spacing:-0.303px;">Stock</span><span class="w" style="left:29px;letter-spacing:-0.221px;">keeping</span><span class="w" style="left:69px;letter-spacing:0.241px;">unit,</span><span class="w" style="left:94px;letter-spacing:-0.292px;">public</span><span class="w" style="left:124px;letter-spacing:0.045px;">product</span><span class="w" style="left:164px;letter-spacing:0.035px;">invemtory</span><span class="w" style="left:215px;">ID</span></span>
<svg style="left:279px;top:255px" width="13" height="12" viewBox="0 0 13 12"><rect x="0" y="0" width="3" height="12" fill="#c4c4c4"/><rect x="10" y="0" width="3" height="12" fill="#c4c4c4"/><g fill="#fbfbfb"><rect x="1" y="3" width="2" height="2"/><rect x="1" y="6" width="2" height="2"/><rect x="1" y="9" width="2" height="2"/><rect x="10" y="3" width="2" height="2"/><rect x="10" y="6" width="2" height="2"/><rect x="10" y="9" width="2" height="2"/></g><rect x="4" y="0" width="5" height="12" fill="#585858"/><g fill="#fff"><rect x="5" y="3" width="3" height="2"/><rect x="5" y="6" width="3" height="2"/><rect x="5" y="9" width="3" height="2"/></g></svg>
<span class="t " style="left:336px;top:255px;"><span class="w" style="letter-spacing:-0.125px;">4</span></span>
<span class="t " style="left:349.41px;top:255px;"><span class="w" style="letter-spacing:-0.111px;">product_name</span></span>
<span class="t " style="left:524.14px;top:255px;"><span class="w" style="letter-spacing:0.04px;">nvarchar(150)</span></span>
<span class="t " style="left:773.89px;top:255px;"><span class="w" style="letter-spacing:-0.132px;">Product</span><span class="w" style="left:40px;letter-spacing:-0.379px;">name</span></span>
<svg style="left:279px;top:276px" width="13" height="12" viewBox="0 0 13 12"><rect x="0" y="0" width="3" height="12" fill="#c4c4c4"/><rect x="10" y="0" width="3" height="12" fill="#c4c4c4"/><g fill="#fbfbfb"><rect x="1" y="3" width="2" height="2"/><rect x="1" y="6" width="2" height="2"/><rect x="1" y="9" width="2" height="2"/><rect x="10" y="3" width="2" height="2"/><rect x="10" y="6" width="2" height="2"/><rect x="10" y="9" width="2" height="2"/></g><rect x="4" y="0" width="5" height="12" fill="#585858"/><g fill="#fff"><rect x="5" y="3" width="3" height="2"/><rect x="5" y="6" width="3" height="2"/><rect x="5" y="9" width="3" height="2"/></g></svg>
<span class="t " style="left:336px;top:276px;"><span class="w" style="letter-spacing:-0.125px;">5</span></span>
<span class="t " style="left:349.41px;top:276px;"><span class="w" style="letter-spacing:0.017px;">product_category_id</span></span>
<span class="t " style="left:524.53px;top:276px;"><span class="w" style="letter-spacing:0.125px;">int</span></span>
<span class="t " style="left:650.46px;top:276px;"><span class="w" style="letter-spacing:0.001px;">dbo.product_categories</span></span>
<span class="t " style="left:773.89px;top:276px;"><span class="w" style="letter-spacing:-0.132px;">Product</span><span class="w" style="left:40px;letter-spacing:0.1px;">category</span></span>
<svg style="left:279px;top:297px" width="13" height="12" viewBox="0 0 13 12"><rect x="0" y="0" width="3" height="12" fill="#c4c4c4"/><rect x="10" y="0" width="3" height="12" fill="#c4c4c4"/><g fill="#fbfbfb"><rect x="1" y="3" width="2" height="2"/><rect x="1" y="6" width="2" height="2"/><rect x="1" y="9" width="2" height="2"/><rect x="10" y="3" width="2" height="2"/><rect x="10" y="6" width="2" height="2"/><rect x="10" y="9" width="2" height="2"/></g><rect x="4" y="0" width="5" height="12" fill="#585858"/><g fill="#fff"><rect x="5" y="3" width="3" height="2"/><rect x="5" y="6" width="3" height="2"/><rect x="5" y="9" width="3" height="2"/></g></svg>
<span class="t " style="left:336px;top:297px;"><span class="w" style="letter-spacing:-0.125px;">6</span></span>
<span class="t " style="left:349.46px;top:297px;"><span class="w" style="letter-spacing:-0.178px;">manager_no</span></span>
<span class="t " style="left:524.53px;top:297px;"><span class="w" style="letter-spacing:0.125px;">int</span></span>
<svg style="left:617px;top:298px" width="10" height="10" viewBox="0 0 10 10"><rect x="0.5" y="0.5" width="9" height="9" fill="#f6f6f6" stroke="#3c3c3c"/><path d="M2.4 4.8L4.3 6.8L7.8 3" fill="none" stroke="#2a2a2a" stroke-width="1.2"/></svg>
<span class="t " style="left:649.77px;top:297px;"><span class="w" style="letter-spacing:-0.16px;">HR.dbo.employees</span></span>
<span class="t " style="left:774.04px;top:297px;"><span class="w" style="letter-spacing:-0.203px;">Manager</span><span class="w" style="left:45px;letter-spacing:-0.213px;">employee</span><span class="w" style="left:94px;letter-spacing:-0.125px;">no</span></span>
<svg style="left:279px;top:318px" width="13" height="12" viewBox="0 0 13 12"><rect x="0" y="0" width="3" height="12" fill="#c4c4c4"/><rect x="10" y="0" width="3" height="12" fill="#c4c4c4"/><g fill="#fbfbfb"><rect x="1" y="3" width="2" height="2"/><rect x="1" y="6" width="2" height="2"/><rect x="1" y="9" width="2" height="2"/><rect x="10" y="3" width="2" height="2"/><rect x="10" y="6" width="2" height="2"/><rect x="10" y="9" width="2" height="2"/></g><rect x="4" y="0" width="5" height="12" fill="#585858"/><g fill="#fff"><rect x="5" y="3" width="3" height="2"/><rect x="5" y="6" width="3" height="2"/><rect x="5" y="9" width="3" height="2"/></g></svg>
<span class="t " style="left:336px;top:318px;"><span class="w" style="letter-spacing:-0.125px;">7</span></span>
<span class="t " style="left:349.3px;top:318px;"><span class="w" style="letter-spacing:-0.169px;">color</span></span>
<span class="t " style="left:524.14px;top:318px;"><span class="w" style="letter-spacing:0.053px;">nvarchar(50)</span></span>
<svg style="left:617px;top:319px" width="10" height="10" viewBox="0 0 10 10"><rect x="0.5" y="0.5" width="9" height="9" fill="#f6f6f6" stroke="#3c3c3c"/><path d="M2.4 4.8L4.3 6.8L7.8 3" fill="none" stroke="#2a2a2a" stroke-width="1.2"/></svg>
<span class="t " style="left:650.45px;top:318px;"><span class="w" style="letter-spacing:0.036px;">dbo.dictionary</span></span>
<div class="b" style="left:770px;top:313px;width:269px;height:22px;background:#fff;"></div>
<div class="b" style="left:770px;top:314px;width:268px;height:20px;background:#fff;border:1px dotted #2a2a2a;"></div>
<span class="t " style="left:774.62px;top:316px;"><span class="w" style="letter-spacing:-0.259px;">Color</span><span class="w" style="left:28px;letter-spacing:0.049px;">(dictionary)</span></span>
<div class="b" style="left:858px;top:316px;width:1px;height:13px;background:#000;"></div>
<svg style="left:279px;top:339px" width="13" height="12" viewBox="0 0 13 12"><rect x="0" y="0" width="3" height="12" fill="#c4c4c4"/><rect x="10" y="0" width="3" height="12" fill="#c4c4c4"/><g fill="#fbfbfb"><rect x="1" y="3" width="2" height="2"/><rect x="1" y="6" width="2" height="2"/><rect x="1" y="9" width="2" height="2"/><rect x="10" y="3" width="2" height="2"/><rect x="10" y="6" width="2" height="2"/><rect x="10" y="9" width="2" height="2"/></g><rect x="4" y="0" width="5" height="12" fill="#585858"/><g fill="#fff"><rect x="5" y="3" width="3" height="2"/><rect x="5" y="6" width="3" height="2"/><rect x="5" y="9" width="3" height="2"/></g></svg>
<span class="t " style="left:336px;top:339px;"><span class="w" style="letter-spacing:-0.125px;">8</span></span>
<span class="t " style="left:349.46px;top:339px;"><span class="w" style="letter-spacing:-0.08px;">mfg_cost</span></span>
<span class="t " style="left:524.66px;top:339px;"><span class="w" style="letter-spacing:0.241px;">float</span></span>
<svg style="left:617px;top:340px" width="10" height="10" viewBox="0 0 10 10"><rect x="0.5" y="0.5" width="9" height="9" fill="#f6f6f6" stroke="#3c3c3c"/><path d="M2.4 4.8L4.3 6.8L7.8 3" fill="none" stroke="#2a2a2a" stroke-width="1.2"/></svg>
<span class="t " style="left:773.65px;top:339px;"><span class="w" style="letter-spacing:-0.083px;">Manufactuiring</span><span class="w" style="left:74px;letter-spacing:-0.047px;">cost</span><span class="w" style="left:97px;letter-spacing:-0.281px;">in</span><span class="w" style="left:108px;letter-spacing:-1.078px;">USD</span></span>
<svg style="left:279px;top:360px" width="13" height="12" viewBox="0 0 13 12"><rect x="0" y="0" width="3" height="12" fill="#c4c4c4"/><rect x="10" y="0" width="3" height="12" fill="#c4c4c4"/><g fill="#fbfbfb"><rect x="1" y="3" width="2" height="2"/><rect x="1" y="6" width="2" height="2"/><rect x="1" y="9" width="2" height="2"/><rect x="10" y="3" width="2" height="2"/><rect x="10" y="6" width="2" height="2"/><rect x="10" y="9" width="2" height="2"/></g><rect x="4" y="0" width="5" height="12" fill="#585858"/><g fill="#fff"><rect x="5" y="3" width="3" height="2"/><rect x="5" y="6" width="3" height="2"/><rect x="5" y="9" width="3" height="2"/></g></svg>
<span class="t " style="left:336px;top:360px;"><span class="w" style="letter-spacing:-0.125px;">9</span></span>
<span class="t " style="left:349.46px;top:360px;"><span class="w" style="letter-spacing:-0.146px;">market_id</span></span>
<span class="t " style="left:524.53px;top:360px;"><span class="w" style="letter-spacing:0.125px;">int</span></span>
<svg style="left:617px;top:361px" width="10" height="10" viewBox="0 0 10 10"><rect x="0.5" y="0.5" width="9" height="9" fill="#f6f6f6" stroke="#3c3c3c"/><path d="M2.4 4.8L4.3 6.8L7.8 3" fill="none" stroke="#2a2a2a" stroke-width="1.2"/></svg>
<span class="t " style="left:650.45px;top:360px;"><span class="w" style="letter-spacing:-0.048px;">dbo.markets</span></span>
<span class="t " style="left:774.0px;top:360px;"><span class="w" style="letter-spacing:-0.323px;">Key</span><span class="w" style="left:21px;letter-spacing:-0.104px;">market</span></span>
<svg style="left:279px;top:381px" width="13" height="12" viewBox="0 0 13 12"><rect x="0" y="0" width="3" height="12" fill="#c4c4c4"/><rect x="10" y="0" width="3" height="12" fill="#c4c4c4"/><g fill="#fbfbfb"><rect x="1" y="3" width="2" height="2"/><rect x="1" y="6" width="2" height="2"/><rect x="1" y="9" width="2" height="2"/><rect x="10" y="3" width="2" height="2"/><rect x="10" y="6" width="2" height="2"/><rect x="10" y="9" width="2" height="2"/></g><rect x="4" y="0" width="5" height="12" fill="#585858"/><g fill="#fff"><rect x="5" y="3" width="3" height="2"/><rect x="5" y="6" width="3" height="2"/><rect x="5" y="9" width="3" height="2"/></g></svg>
<span class="t " style="left:330px;top:381px;"><span class="w" style="letter-spacing:-0.125px;">10</span></span>
<span class="t " style="left:349.26px;top:381px;"><span class="w" style="letter-spacing:-0.188px;">segment_id</span></span>
<span class="t " style="left:524.53px;top:381px;"><span class="w" style="letter-spacing:0.125px;">int</span></span>
<svg style="left:617px;top:382px" width="10" height="10" viewBox="0 0 10 10"><rect x="0.5" y="0.5" width="9" height="9" fill="#f6f6f6" stroke="#3c3c3c"/><path d="M2.4 4.8L4.3 6.8L7.8 3" fill="none" stroke="#2a2a2a" stroke-width="1.2"/></svg>
<span class="t " style="left:650.45px;top:381px;"><span class="w" style="letter-spacing:-0.092px;">dbo.segments</span></span>
<span class="t " style="left:773.89px;top:381px;"><span class="w" style="letter-spacing:-0.132px;">Product</span><span class="w" style="left:40px;letter-spacing:-0.172px;">segment</span></span>
<svg style="left:279px;top:402px" width="13" height="12" viewBox="0 0 13 12"><rect x="0" y="0" width="3" height="12" fill="#c4c4c4"/><rect x="10" y="0" width="3" height="12" fill="#c4c4c4"/><g fill="#fbfbfb"><rect x="1" y="3" width="2" height="2"/><rect x="1" y="6" width="2" height="2"/><rect x="1" y="9" width="2" height="2"/><rect x="10" y="3" width="2" height="2"/><rect x="10" y="6" width="2" height="2"/><rect x="10" y="9" width="2" height="2"/></g><rect x="4" y="0" width="5" height="12" fill="#585858"/><g fill="#fff"><rect x="5" y="3" width="3" height="2"/><rect x="5" y="6" width="3" height="2"/><rect x="5" y="9" width="3" height="2"/></g></svg>
<span class="t " style="left:330px;top:402px;"><span class="w" style="letter-spacing:0.289px;">11</span></span>
<span class="t " style="left:349.46px;top:402px;"><span class="w" style="letter-spacing:-0.051px;">release_date</span></span>
<span class="t " style="left:524.49px;top:402px;"><span class="w" style="letter-spacing:0.145px;">date</span></span>
<svg style="left:617px;top:403px" width="10" height="10" viewBox="0 0 10 10"><rect x="0.5" y="0.5" width="9" height="9" fill="#f6f6f6" stroke="#3c3c3c"/><path d="M2.4 4.8L4.3 6.8L7.8 3" fill="none" stroke="#2a2a2a" stroke-width="1.2"/></svg>
<span class="t " style="left:773.89px;top:402px;"><span class="w" style="letter-spacing:-0.132px;">Product</span><span class="w" style="left:40px;letter-spacing:-0.104px;">market</span><span class="w" style="left:76px;letter-spacing:-0.161px;">releas</span><span class="w" style="left:108px;letter-spacing:0.145px;">date</span><span class="w" style="left:133px;letter-spacing:-0.004px;">(actual</span><span class="w" style="left:169px;letter-spacing:0.109px;">or</span><span class="w" style="left:182px;letter-spacing:-0.102px;">planned)</span></span>
<svg style="left:279px;top:423px" width="13" height="12" viewBox="0 0 13 12"><rect x="0" y="0" width="3" height="12" fill="#c4c4c4"/><rect x="10" y="0" width="3" height="12" fill="#c4c4c4"/><g fill="#fbfbfb"><rect x="1" y="3" width="2" height="2"/><rect x="1" y="6" width="2" height="2"/><rect x="1" y="9" width="2" height="2"/><rect x="10" y="3" width="2" height="2"/><rect x="10" y="6" width="2" height="2"/><rect x="10" y="9" width="2" height="2"/></g><rect x="4" y="0" width="5" height="12" fill="#585858"/><g fill="#fff"><rect x="5" y="3" width="3" height="2"/><rect x="5" y="6" width="3" height="2"/><rect x="5" y="9" width="3" height="2"/></g></svg>
<span class="t " style="left:330px;top:423px;"><span class="w" style="letter-spacing:-0.125px;">12</span></span>
<span class="t " style="left:349.64px;top:423px;"><span class="w" style="letter-spacing:0.039px;">end_of_support</span></span>
<span class="t " style="left:524.49px;top:423px;"><span class="w" style="letter-spacing:0.145px;">date</span></span>
<svg style="left:617px;top:424px" width="10" height="10" viewBox="0 0 10 10"><rect x="0.5" y="0.5" width="9" height="9" fill="#f6f6f6" stroke="#3c3c3c"/><path d="M2.4 4.8L4.3 6.8L7.8 3" fill="none" stroke="#2a2a2a" stroke-width="1.2"/></svg>
<span class="t " style="left:773.88px;top:423px;"><span class="w" style="letter-spacing:-0.339px;">Planned</span><span class="w" style="left:41px;letter-spacing:-0.12px;">end</span><span class="w" style="left:62px;letter-spacing:0.406px;">of</span><span class="w" style="left:75px;letter-spacing:0.045px;">product</span><span class="w" style="left:115px;letter-spacing:0.045px;">support</span></span>
</body></html>
